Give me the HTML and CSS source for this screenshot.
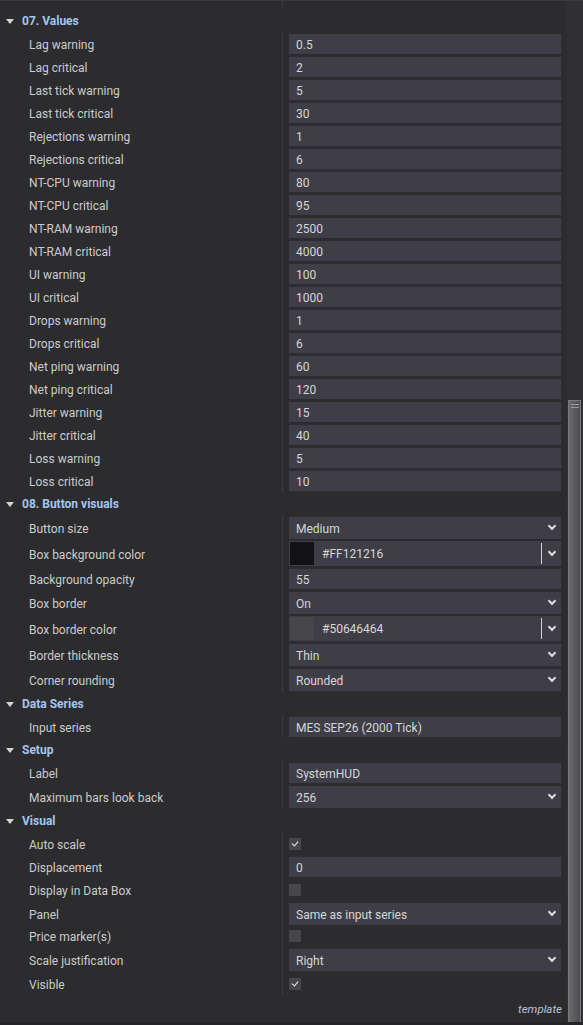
FILE: index.html
```html
<!DOCTYPE html>
<html lang="en">
<head>
    <meta charset="UTF-8">
    <meta name="viewport" content="width=device-width, initial-scale=1.0">
    <title>Indicator properties</title>
    <link rel="stylesheet" href="styles.css">
</head>
<body>
    <div class="window">
        <div class="props">
            <div class="top-cut">
                <div class="label"></div>
                <div class="value"><div class="cut-line"></div></div>
            </div>

            <div class="section-head"><span class="caret"></span>07. Values</div>
            <div class="section-body">
                <div class="row"><div class="label">Lag warning</div><div class="value"><div class="box">0.5</div></div></div>
                <div class="row"><div class="label">Lag critical</div><div class="value"><div class="box">2</div></div></div>
                <div class="row"><div class="label">Last tick warning</div><div class="value"><div class="box">5</div></div></div>
                <div class="row"><div class="label">Last tick critical</div><div class="value"><div class="box">30</div></div></div>
                <div class="row"><div class="label">Rejections warning</div><div class="value"><div class="box">1</div></div></div>
                <div class="row"><div class="label">Rejections critical</div><div class="value"><div class="box">6</div></div></div>
                <div class="row"><div class="label">NT-CPU warning</div><div class="value"><div class="box">80</div></div></div>
                <div class="row"><div class="label">NT-CPU critical</div><div class="value"><div class="box">95</div></div></div>
                <div class="row"><div class="label">NT-RAM warning</div><div class="value"><div class="box">2500</div></div></div>
                <div class="row"><div class="label">NT-RAM critical</div><div class="value"><div class="box">4000</div></div></div>
                <div class="row"><div class="label">UI warning</div><div class="value"><div class="box">100</div></div></div>
                <div class="row"><div class="label">UI critical</div><div class="value"><div class="box">1000</div></div></div>
                <div class="row"><div class="label">Drops warning</div><div class="value"><div class="box">1</div></div></div>
                <div class="row"><div class="label">Drops critical</div><div class="value"><div class="box">6</div></div></div>
                <div class="row"><div class="label">Net ping warning</div><div class="value"><div class="box">60</div></div></div>
                <div class="row"><div class="label">Net ping critical</div><div class="value"><div class="box">120</div></div></div>
                <div class="row"><div class="label">Jitter warning</div><div class="value"><div class="box">15</div></div></div>
                <div class="row"><div class="label">Jitter critical</div><div class="value"><div class="box">40</div></div></div>
                <div class="row"><div class="label">Loss warning</div><div class="value"><div class="box">5</div></div></div>
                <div class="row"><div class="label">Loss critical</div><div class="value"><div class="box">10</div></div></div>
            </div>

            <div class="section-head"><span class="caret"></span>08. Button visuals</div>
            <div class="section-body">
                <div class="row row-select"><div class="label">Button size</div><div class="value"><div class="box select">Medium<span class="chev"></span></div></div></div>
                <div class="row row-color"><div class="label">Box background color</div><div class="value"><div class="box color"><span class="swatch swatch-dark"></span><span class="hex">#FF121216</span><span class="split"></span><span class="chev"></span></div></div></div>
                <div class="row"><div class="label">Background opacity</div><div class="value"><div class="box">55</div></div></div>
                <div class="row row-select"><div class="label">Box border</div><div class="value"><div class="box select">On<span class="chev"></span></div></div></div>
                <div class="row row-color"><div class="label">Box border color</div><div class="value"><div class="box color"><span class="swatch swatch-grey"></span><span class="hex">#50646464</span><span class="split"></span><span class="chev"></span></div></div></div>
                <div class="row row-select"><div class="label">Border thickness</div><div class="value"><div class="box select">Thin<span class="chev"></span></div></div></div>
                <div class="row row-select"><div class="label">Corner rounding</div><div class="value"><div class="box select">Rounded<span class="chev"></span></div></div></div>
            </div>

            <div class="section-head"><span class="caret"></span>Data Series</div>
            <div class="section-body">
                <div class="row"><div class="label">Input series</div><div class="value"><div class="box">MES SEP26 (2000 Tick)</div></div></div>
            </div>

            <div class="section-head"><span class="caret"></span>Setup</div>
            <div class="section-body">
                <div class="row"><div class="label">Label</div><div class="value"><div class="box">SystemHUD</div></div></div>
                <div class="row row-select"><div class="label">Maximum bars look back</div><div class="value"><div class="box select">256<span class="chev"></span></div></div></div>
            </div>

            <div class="section-head"><span class="caret"></span>Visual</div>
            <div class="section-body">
                <div class="row"><div class="label">Auto scale</div><div class="value"><span class="check checked"></span></div></div>
                <div class="row"><div class="label">Displacement</div><div class="value"><div class="box">0</div></div></div>
                <div class="row"><div class="label">Display in Data Box</div><div class="value"><span class="check"></span></div></div>
                <div class="row"><div class="label">Panel</div><div class="value"><div class="box select">Same as input series<span class="chev"></span></div></div></div>
                <div class="row"><div class="label">Price marker(s)</div><div class="value"><span class="check"></span></div></div>
                <div class="row row-select"><div class="label">Scale justification</div><div class="value"><div class="box select">Right<span class="chev"></span></div></div></div>
                <div class="row"><div class="label">Visible</div><div class="value"><span class="check checked"></span></div></div>
            </div>

            <div class="footer">template</div>
        </div>

        <div class="scrollbar">
            <div class="thumb"><span class="grip"></span><span class="grip"></span></div>
        </div>
    </div>
</body>
</html>
```

FILE: styles.css
```css
* {
    margin: 0;
    padding: 0;
    box-sizing: border-box;
}

body {
    background: #2c2c2f;
    font-family: 'Roboto', 'Inter', sans-serif;
    font-size: 12px;
    color: #cbcbcb;
}

.window {
    display: flex;
    width: 583px;
    height: 1025px;
    border-top: 1px solid #3a3a3e;
    border-bottom: 3px solid #252528;
    background: #2c2c2f;
}

.props {
    width: 567px;
    display: flex;
    flex-direction: column;
}

.props > * {
    flex-shrink: 0;
}

.top-cut {
    display: grid;
    grid-template-columns: 282px 1fr;
    height: 8px;
}

.top-cut .value {
    padding: 5px 6px 0 7px;
}

.cut-line {
    height: 1px;
    margin-top: 1px;
    background: #46464b;
}

.section-head {
    height: 23px;
    display: flex;
    align-items: center;
    padding: 1px 0 0 6px;
    font-weight: 700;
    color: #a3c6f0;
}

.caret {
    width: 0;
    height: 0;
    border-left: 4.5px solid transparent;
    border-right: 4.5px solid transparent;
    border-top: 5px solid #d4d4d4;
    margin-right: 8px;
}

.row {
    display: grid;
    grid-template-columns: 282px 1fr;
    height: 23px;
}

.row-select {
    height: 25px;
}

.row-color {
    height: 27px;
}

.label {
    display: flex;
    align-items: center;
    padding: 2px 0 0 29px;
    white-space: nowrap;
}

.value {
    border-left: 1px solid #3b3b3f;
    padding: 2px 6px 1px 6px;
    display: flex;
    align-items: center;
}

.box {
    width: 100%;
    height: 20px;
    background: #3f3e46;
    color: #d6d6d6;
    padding: 1px 0 0 7px;
    display: flex;
    align-items: center;
    white-space: nowrap;
}

.select {
    position: relative;
    height: 22px;
}

.row-color .value {
    padding-top: 1px;
    padding-bottom: 1px;
}

.color {
    height: 25px;
    padding: 0 0 0 1px;
    position: relative;
}

.swatch {
    width: 24px;
    height: 23px;
    margin-right: 8px;
}

.hex {
    padding-top: 1px;
}

.swatch-dark {
    background: #131317;
}

.swatch-grey {
    background: #46464b;
}

.split {
    position: absolute;
    right: 19px;
    top: 2px;
    bottom: 2px;
    width: 1px;
    background: #d2d2d2;
}

.chev {
    position: absolute;
    right: 6px;
    top: 50%;
    width: 6px;
    height: 6px;
    margin-top: -5px;
    border-right: 2px solid #dcdcdc;
    border-bottom: 2px solid #dcdcdc;
    transform: rotate(45deg);
}

.check {
    width: 12px;
    height: 12px;
    background: #47464d;
    position: relative;
}

.check.checked::after {
    content: "";
    position: absolute;
    left: 4px;
    top: 2px;
    width: 3px;
    height: 5px;
    border-right: 1.5px solid #f0f0f0;
    border-bottom: 1.5px solid #f0f0f0;
    transform: rotate(40deg);
}

.footer {
    flex: 1 0 auto;
    padding: 7px 5px 0 0;
    text-align: right;
    font-style: italic;
    font-size: 11.5px;
    color: #b7c2d4;
}

.scrollbar {
    width: 16px;
    background: #303033;
    padding: 399px 2px 0 1px;
}

.thumb {
    height: 100%;
    border: 1px solid #7a7a7c;
    border-bottom: none;
    background: linear-gradient(to right, #6c6c6e, #5c5c5e 50%, #4e4e50);
    padding: 3px 1px 0 2px;
    display: flex;
    flex-direction: column;
    align-items: flex-end;
    gap: 2px;
}

.grip {
    width: 8px;
    height: 1px;
    background: #9a9a9c;
}
```
